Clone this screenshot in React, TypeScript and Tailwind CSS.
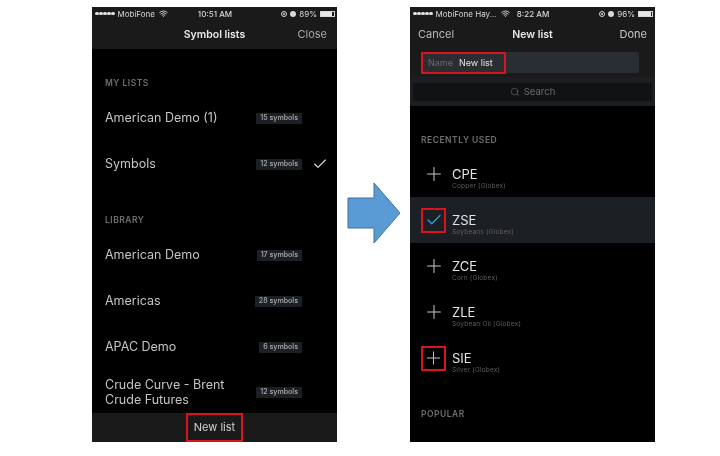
import { Check, Plus, Search, Wifi } from "lucide-react";

const myLists = [
  { name: "American Demo (1)", count: "15 symbols" },
  { name: "Symbols", count: "12 symbols", checked: true },
];

const library = [
  { name: "American Demo", count: "17 symbols" },
  { name: "Americas", count: "28 symbols" },
  { name: "APAC Demo", count: "6 symbols" },
];

const recent = [
  { code: "CPE", desc: "Copper (Globex)" },
  { code: "ZSE", desc: "Soybeans (Globex)", added: true, marked: true },
  { code: "ZCE", desc: "Corn (Globex)" },
  { code: "ZLE", desc: "Soybean Oil (Globex)" },
  { code: "SIE", desc: "Silver (Globex)", marked: true },
];

function StatusBar({ carrier, time, battery, fill }: { carrier: string; time: string; battery: string; fill: string }) {
  return (
    <div className="h-[13px] bg-[#1a1a1a] flex items-center justify-between pl-[3px] pr-[2px] text-[8px] text-[#d8d8d8] shrink-0">
      <div className="flex items-center gap-[1px] w-[88px]">
        <div className="flex gap-[0.5px] mr-[2px] shrink-0">
          {[0, 1, 2, 3, 4].map((i) => (
            <span key={i} className="w-[3.5px] h-[3.5px] rounded-full bg-[#e0e0e0]" />
          ))}
        </div>
        <span className="whitespace-nowrap">{carrier}</span>
        <Wifi className="w-[9px] h-[9px] ml-[3px] shrink-0" strokeWidth={2.5} />
      </div>
      <span className="font-medium">{time}</span>
      <div className="flex items-center justify-end gap-[3px] w-[88px]">
        <span className="w-[6px] h-[6px] rounded-full border border-[#d8d8d8] flex items-center justify-center">
          <span className="w-[2px] h-[2px] rounded-full bg-[#d8d8d8]" />
        </span>
        <span className="w-[6px] h-[6px] rounded-full bg-[#d8d8d8]" />
        <span>{battery}</span>
        <span className="w-[15px] h-[6px] border border-[#d8d8d8] flex">
          <span className={`${fill} bg-[#e8e8e8]`} />
        </span>
      </div>
    </div>
  );
}

function Badge({ text }: { text: string }) {
  return (
    <span className="h-[11px] px-[4px] bg-[#1c1f23] text-[#a0a0a0] text-[7px] font-semibold flex items-center whitespace-nowrap">
      {text}
    </span>
  );
}

function ListRow({ name, count, checked }: { name: string; count: string; checked?: boolean }) {
  return (
    <div className="h-[46px] flex items-center pl-[13px] pr-[9px]">
      <span className="flex-1 text-[12.5px] text-[#c4c4c4]">{name}</span>
      <Badge text={count} />
      <div className="w-[26px] flex justify-end">
        {checked && <Check className="w-[16px] h-[16px] text-[#e0e0e0]" strokeWidth={1.75} />}
      </div>
    </div>
  );
}

function SectionLabel({ text }: { text: string }) {
  return <div className="text-[8.5px] font-semibold tracking-[0.5px] text-[#6e6e6e]">{text}</div>;
}

function SymbolRow({ code, desc, added, marked }: { code: string; desc: string; added?: boolean; marked?: boolean }) {
  return (
    <div className={`h-[46px] flex items-center pl-[11px] ${added ? "bg-[#1c2024]" : ""}`}>
      <div className={`w-[25px] h-[25px] flex items-center justify-center ${marked ? "border-2 border-[#d8141f]" : ""}`}>
        {added ? (
          <Check className="w-[18px] h-[18px] text-[#2f9fd8]" strokeWidth={1.75} />
        ) : (
          <Plus className="w-[22px] h-[22px] text-[#c8c8c8]" strokeWidth={1.1} />
        )}
      </div>
      <div className="ml-[6px] pt-[9px] flex flex-col">
        <span className="text-[13px] leading-[15px] text-[#e4e4e4]">{code}</span>
        <span className="text-[6.5px] leading-[9px] tracking-[0.2px] text-[#5f5f5f]">{desc}</span>
      </div>
    </div>
  );
}

export default function App() {
  return (
    <div className="w-[720px] h-[456px] bg-white flex pl-[92px] pt-[7px] overflow-hidden font-['Inter',sans-serif] blur-[0.4px]">
      {/* Symbol lists */}
      <div className="w-[245px] h-[435px] bg-black flex flex-col">
        <StatusBar carrier="MobiFone" time="10:51 AM" battery="89%" fill="w-[88%]" />
        <div className="h-[29px] bg-[#1a1a1a] flex items-center justify-center relative shrink-0">
          <span className="text-[10.5px] font-semibold text-[#e8e8e8]">Symbol lists</span>
          <span className="absolute right-[10px] text-[11px] text-[#a8a8a8]">Close</span>
        </div>
        <div className="flex-1 flex flex-col overflow-hidden">
          <div className="pl-[13px] pt-[28px] h-[46px] shrink-0">
            <SectionLabel text="MY LISTS" />
          </div>
          {myLists.map((l) => (
            <ListRow key={l.name} {...l} />
          ))}
          <div className="pl-[13px] pt-[27px] h-[45px] shrink-0">
            <SectionLabel text="LIBRARY" />
          </div>
          {library.map((l) => (
            <ListRow key={l.name} {...l} />
          ))}
          <div className="flex items-center pl-[13px] pr-[35px] mt-[7px]">
            <span className="flex-1 text-[12.5px] leading-[15px] text-[#c4c4c4]">
              Crude Curve - Brent
              <br />
              Crude Futures
            </span>
            <Badge text="12 symbols" />
          </div>
        </div>
        <div className="h-[29px] bg-[#1a1a1a] flex justify-center shrink-0">
          <div className="w-[57px] h-[29px] border-2 border-[#d8141f] flex items-center justify-center text-[11px] text-[#d0d0d0]">
            New list
          </div>
        </div>
      </div>

      {/* Arrow */}
      <div className="w-[73px] h-[435px] flex items-center justify-center pb-[24px]">
        <svg width="54" height="62" viewBox="0 0 54 62">
          <path d="M1 16H27V1L53 31L27 61V46H1Z" fill="#5b9bd5" stroke="#41719c" strokeWidth="1" />
        </svg>
      </div>

      {/* New list */}
      <div className="w-[245px] h-[435px] bg-black flex flex-col">
        <StatusBar carrier="MobiFone Hay..." time="8:22 AM" battery="96%" fill="w-[96%]" />
        <div className="h-[29px] bg-[#1a1a1a] grid grid-cols-3 items-center px-[8px] shrink-0">
          <span className="text-[11px] text-[#b8b8b8]">Cancel</span>
          <span className="text-[10.5px] font-semibold text-[#e8e8e8] text-center">New list</span>
          <span className="text-[11px] text-[#c8c8c8] text-right">Done</span>
        </div>
        <div className="h-[28px] bg-[#1a1a1a] px-[11px] pt-[3px] shrink-0">
          <div className="w-[218px] h-[21px] bg-[#2a2d31] rounded-[2px]">
            <div className="w-[85px] h-[22px] border-2 border-[#d8141f] flex items-center pl-[5px] gap-[6px] text-[9px]">
              <span className="text-[#6a6a6a]">Name</span>
              <span className="text-[#e0e0e0]">New list</span>
            </div>
          </div>
        </div>
        <div className="h-[29px] bg-[#1c1e21] px-[3px] flex items-center shrink-0">
          <div className="w-full h-[18px] bg-[#111214] rounded-[2px] flex items-center justify-center gap-[4px] pt-[1px] text-[9.5px] text-[#6a6a6a]">
            <Search className="w-[10px] h-[10px]" strokeWidth={1.5} />
            Search
          </div>
        </div>
        <div className="pl-[11px] pt-[28px] h-[45px] shrink-0">
          <SectionLabel text="RECENTLY USED" />
        </div>
        {recent.map((s) => (
          <SymbolRow key={s.code} {...s} />
        ))}
        <div className="pl-[11px] pt-[27px]">
          <SectionLabel text="POPULAR" />
        </div>
      </div>
    </div>
  );
}
